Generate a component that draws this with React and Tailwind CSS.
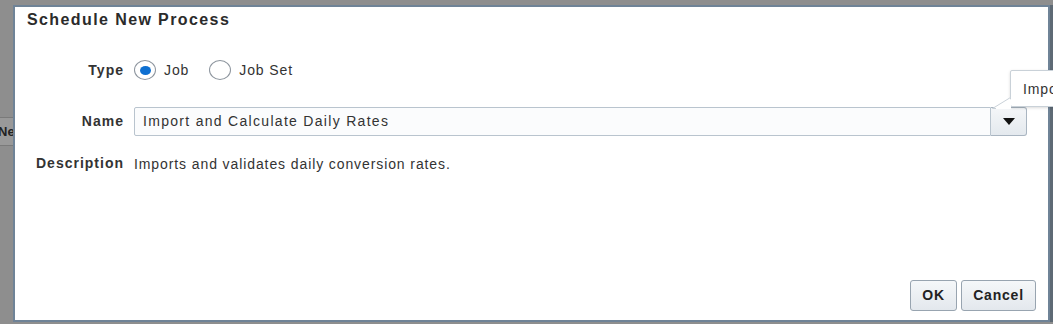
import React, { useState } from "react";

// radio button, slightly wider than tall like the screenshot
const Radio = ({ checked, label, onClick }) => (
  <button
    type="button"
    onClick={onClick}
    className="flex items-center gap-[8px] text-[14px] tracking-[0.9px] text-[#333]"
  >
    <span className="flex h-[20px] w-[22px] items-center justify-center rounded-[50%] border border-[#8d959e] bg-white">
      {checked && (
        <span className="h-[9px] w-[11px] rounded-[50%] bg-[#0d6fd1]" />
      )}
    </span>
    {label}
  </button>
);

const Label = ({ children }) => (
  <div className="text-right text-[14px] font-bold tracking-[1px] text-[#333]">
    {children}
  </div>
);

export default function App() {
  const [type, setType] = useState("job");

  return (
    <div
      className="flex h-[324px] w-[1053px] overflow-hidden bg-[#8e8e8e] pt-[5px] pb-[2px]"
      style={{ fontFamily: '"Liberation Sans", Arial, sans-serif' }}
    >
      {/* page behind the dialog */}
      <div className="flex w-[13px] flex-col pt-[112px]">
        <div className="h-[1px] bg-[#7a7a7a]" />
        <div className="h-[27px] bg-[#999] pt-[4px] text-[13px] font-bold leading-[20px] text-[#222]">
          <span className="-ml-[2px]">Ne</span>
        </div>
        <div className="h-[1px] bg-[#7a7a7a]" />
      </div>

      {/* dialog */}
      <div className="relative z-10 flex flex-1 flex-col border-2 border-[#6f8397] bg-white">
        <div className="pt-[3px] pl-[12px] text-[16px] font-bold leading-[20px] tracking-[1.4px] text-[#2b2b2b]">
          Schedule New Process
        </div>

        <div className="mt-[29px] grid grid-cols-[109px_1fr] items-center gap-x-[10px] pr-[21px]">
          <Label>Type</Label>
          <div className="flex h-[22px] items-center gap-[20px]">
            <Radio
              checked={type === "job"}
              label="Job"
              onClick={() => setType("job")}
            />
            <Radio
              checked={type === "set"}
              label="Job Set"
              onClick={() => setType("set")}
            />
          </div>

          <div className="col-span-2 h-[26px]" />

          <Label>Name</Label>
          <div className="flex h-[29px]">
            <div className="flex flex-1 items-center rounded-l-[2px] border border-[#b9c4ce] bg-[#fbfcfd] pl-[8px] text-[14px] tracking-[1.3px] text-[#333]">
              Import and Calculate Daily Rates
            </div>
            <button
              type="button"
              className="flex w-[36px] items-center justify-center rounded-r-[3px] border border-l-0 border-[#a9b5c1] bg-gradient-to-b from-[#f4f6f8] to-[#e4e9ee]"
            >
              <svg width="12" height="7" viewBox="0 0 12 7">
                <path d="M0 0h12L6 7z" fill="#111" />
              </svg>
            </button>
          </div>

          <div className="col-span-2 h-[17px]" />

          <Label>Description</Label>
          <div className="text-[14px] leading-[20px] tracking-[0.9px] text-[#333]">
            Imports and validates daily conversion rates.
          </div>
        </div>

        <div className="mt-auto flex justify-end gap-[4px] pr-[12px] pb-[9px]">
          <button className="h-[31px] w-[47px] rounded-[3px] border border-[#98a4b0] bg-gradient-to-b from-[#f5f7f9] to-[#e3e8ed] text-[14px] font-bold tracking-[0.8px] text-[#222]">
            OK
          </button>
          <button className="h-[31px] w-[75px] rounded-[3px] border border-[#98a4b0] bg-gradient-to-b from-[#f5f7f9] to-[#e3e8ed] text-[14px] font-bold tracking-[0.8px] text-[#222]">
            Cancel
          </button>
        </div>

        {/* tooltip over the name field */}
        <div className="absolute top-[63px] left-[995px] h-[37px] w-[60px] rounded-l-[2px] border border-[#c9d1d8] bg-white pt-[8px] pl-[12px] text-[14px] tracking-[0.9px] text-[#333] shadow-[0_1px_3px_rgba(0,0,0,0.15)]">
          Impo
        </div>
        <svg
          className="absolute top-[90px] left-[977px]"
          width="20"
          height="12"
          viewBox="0 0 20 12"
        >
          <path d="M0.5 11.5 L18.5 0.5 L18.5 11.5 Z" fill="#fff" stroke="#c9d1d8" />
          <path d="M4 11 L19 2 L19 12 L4 12 Z" fill="#fff" />
        </svg>
      </div>

      <div className="w-[3px] bg-[#5e6a75]" />
    </div>
  );
}
